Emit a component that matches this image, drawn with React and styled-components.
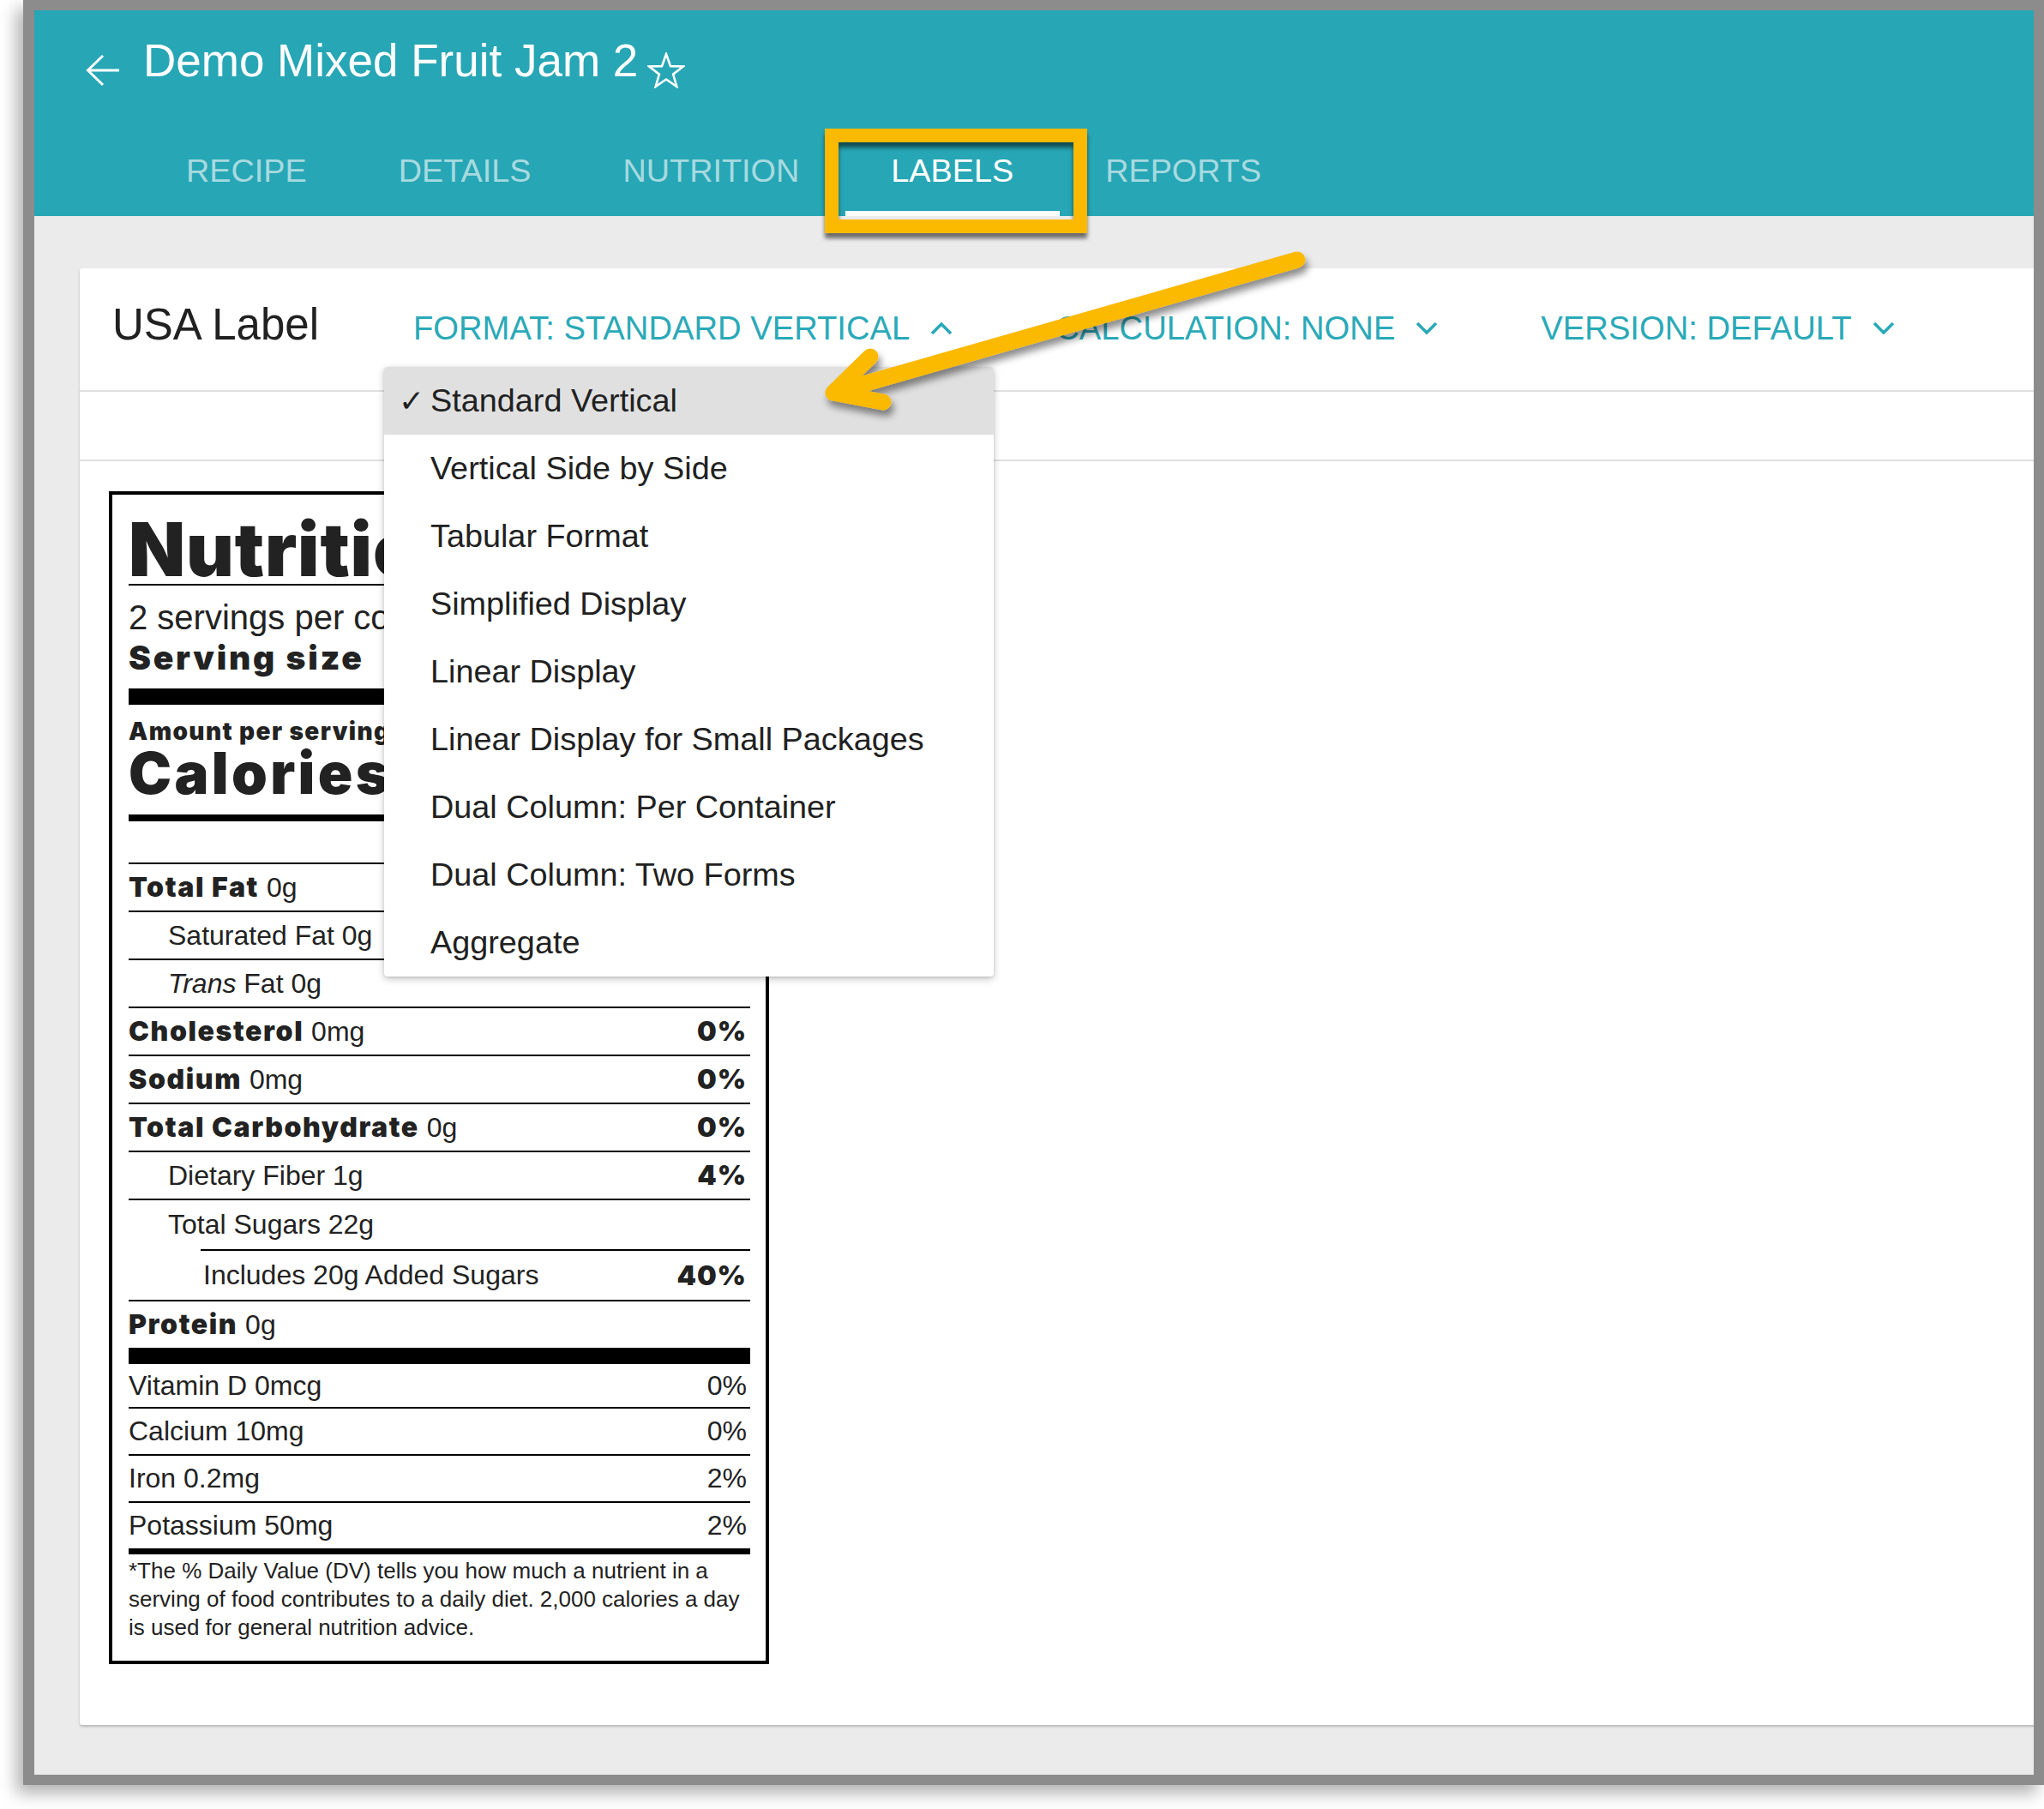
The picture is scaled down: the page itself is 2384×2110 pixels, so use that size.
import React from "react";
import styled, { createGlobalStyle } from "styled-components";

const teal = "#27a6b5";
const tealText = "#2aa9b8";
const ink = "#212121";
const marker = "#fbb900";
const heavy = `"Inter", "Roboto", "Liberation Sans", sans-serif`;

const GlobalStyle = createGlobalStyle`
  html, body {
    margin: 0;
    padding: 0;
    background: #fff;
  }
  body {
    font-family: "Liberation Sans", Arial, sans-serif;
  }
`;

const Screen = styled.div`
  position: relative;
  width: 2384px;
  height: 2110px;
  overflow: hidden;
  background: #fff;
`;

const Frame = styled.div`
  box-sizing: border-box;
  margin-left: 27px;
  width: 2357px;
  height: 2082px;
  border: 12px solid #8c8c8c;
  border-left-width: 13px;
  box-shadow: -8px 10px 18px rgba(0, 0, 0, 0.3);
  display: flex;
  flex-direction: column;
  overflow: hidden;
  background: #ebebeb;
`;

/* ---------- top bar ---------- */

const Header = styled.header`
  box-sizing: border-box;
  height: 240px;
  padding-top: 28px;
  background: ${teal};
  color: #fff;
`;

const TitleRow = styled.div`
  display: flex;
  align-items: center;
  height: 62px;
  padding-left: 60px;
`;

const IconSlot = styled.span`
  display: flex;
  margin-top: 22px;
  margin-left: ${p => p.$ml || 0}px;
  margin-right: ${p => p.$mr || 0}px;
`;

const Title = styled.h1`
  margin: 0;
  font-size: 53px;
  font-weight: 400;
  line-height: 62px;
  white-space: nowrap;
`;

const Tabs = styled.nav`
  display: flex;
  margin-top: 45px;
  padding-left: 123.5px;
`;

const Tab = styled.div`
  padding: 30px 53.5px 25px;
  font-size: 37.8px;
  line-height: 44px;
  text-transform: uppercase;
  white-space: nowrap;
  color: ${p => (p.$active ? "#fff" : "rgba(255, 255, 255, 0.6)")};
  border-bottom: 6px solid ${p => (p.$active ? "#fff" : "transparent")};
`;

/* ---------- card ---------- */

const Content = styled.main`
  flex: 1;
  padding: 61px 0 0 53px;
`;

const Card = styled.section`
  position: relative;
  margin-right: -40px;
  background: #fff;
  border-radius: 3px;
  box-shadow: 0 2px 3px rgba(0, 0, 0, 0.22);
`;

const CardHeader = styled.div`
  display: flex;
  align-items: baseline;
  box-sizing: border-box;
  height: 144px;
  padding: 36px 0 0 38px;
  border-bottom: 2px solid #e0e0e0;
`;

const CardTitle = styled.h2`
  margin: 0 50px 0 0;
  font-size: 51px;
  font-weight: 400;
  line-height: 60px;
  color: ${ink};
  white-space: nowrap;
`;

const Trigger = styled.div`
  display: inline-flex;
  align-items: center;
  gap: 24px;
  padding: 0 60px;
  font-size: 38.2px;
  line-height: 44px;
  color: ${tealText};
  text-transform: uppercase;
  white-space: nowrap;
`;

const Toolbar = styled.div`
  box-sizing: border-box;
  height: 81px;
  border-bottom: 2px solid #e0e0e0;
`;

const CardBody = styled.div`
  padding: 35px 0 71px 34px;
`;

const Menu = styled.ul`
  position: absolute;
  left: 355px;
  top: 115px;
  z-index: 2;
  width: 711px;
  margin: 0;
  padding: 0;
  list-style: none;
  background: #fff;
  border-radius: 4px;
  overflow: hidden;
  box-shadow: 0 3px 10px rgba(0, 0, 0, 0.22), 0 1px 3px rgba(0, 0, 0, 0.12);
`;

const MenuItem = styled.li`
  display: flex;
  align-items: baseline;
  height: 79px;
  font-size: 37.8px;
  line-height: 79px;
  color: ${ink};
  white-space: nowrap;
  background: ${p => (p.$selected ? "#e0e0e0" : "transparent")};
`;

const Check = styled.span`
  box-sizing: border-box;
  width: 54px;
  padding-left: 17px;
  font-family: "DejaVu Sans", sans-serif;
  font-size: 36px;
`;

/* ---------- nutrition facts panel ---------- */

const Panel = styled.div`
  box-sizing: border-box;
  width: 770px;
  padding: 0 16px 22px 19px;
  border: 4px solid #000;
  color: #222;
  font-family: "Liberation Sans", Arial, sans-serif;
`;

const Strong = styled.span`
  font-family: ${heavy};
  font-weight: 900;
  letter-spacing: 0.05em;
`;

const PanelTitle = styled.div`
  padding-top: 24px;
  border-bottom: 2px solid #000;
  font-family: ${heavy};
  font-weight: 900;
  font-size: 86px;
  line-height: 80px;
  letter-spacing: 0.01em;
  white-space: nowrap;
`;

const Servings = styled.div`
  margin-top: 15px;
  font-size: 40px;
  line-height: 44px;
  white-space: nowrap;
`;

const HeavyLine = styled.div`
  display: flex;
  justify-content: space-between;
  margin-top: ${p => p.$mt || 0}px;
  font-family: ${heavy};
  font-weight: 900;
  font-size: ${p => p.$size}px;
  line-height: ${p => p.$lh}px;
  letter-spacing: ${p => p.$track || 0.05}em;
  white-space: nowrap;
`;

const Bar = styled.div`
  height: ${p => p.$h}px;
  margin-top: ${p => p.$mt || 0}px;
  margin-right: 2px;
  background: #000;
`;

const DvHead = styled.div`
  text-align: right;
  font-family: ${heavy};
  font-weight: 900;
  font-size: 24px;
  line-height: 48px;
`;

const Row = styled.div`
  display: flex;
  justify-content: space-between;
  margin-left: ${p => p.$inset || 0}px;
  margin-right: 2px;
  padding-left: ${p => p.$indent || 0}px;
  padding-right: 4px;
  border-top: ${p => (p.$plain ? "none" : "2px solid #000")};
  font-size: 32px;
  line-height: ${p => p.$lh || 54}px;
  white-space: nowrap;
`;

const Dv = styled.span`
  font-family: ${p => (p.$light ? "inherit" : heavy)};
  font-weight: ${p => (p.$light ? 400 : 900)};
  letter-spacing: ${p => (p.$light ? 0 : "0.03em")};
`;

const Footnote = styled.p`
  margin: 0;
  padding-top: 3px;
  font-size: 26px;
  line-height: 33px;
`;

/* ---------- callouts drawn over the page ---------- */

const Callouts = styled.svg`
  position: absolute;
  left: 0;
  top: 0;
  z-index: 5;
  pointer-events: none;
`;

const BackArrow = () => (
  <svg width="40" height="38" viewBox="0 0 40 38" fill="none" stroke="#fff" strokeWidth="3">
    <path d="M20 2 L2.5 19 L20 36 M2.5 19 H39" />
  </svg>
);

const StarOutline = () => (
  <svg width="44" height="42" viewBox="0 0 44 42" fill="none" stroke="#fff" strokeWidth="2.6" strokeLinejoin="miter">
    <polygon points="22,2 27,16.1 42,16.5 30.1,25.6 34.3,40 22,31.5 9.7,40 13.9,25.6 2,16.5 17,16.1" />
  </svg>
);

const Chevron = ({ up }) => (
  <svg width="26" height="16" viewBox="0 0 26 16" fill="none" stroke={tealText} strokeWidth="3.6">
    <polyline points={up ? "2,14 13,3 24,14" : "2,2 13,13 24,2"} />
  </svg>
);

const tabs = ["Recipe", "Details", "Nutrition", "Labels", "Reports"];

const formats = [
  "Standard Vertical",
  "Vertical Side by Side",
  "Tabular Format",
  "Simplified Display",
  "Linear Display",
  "Linear Display for Small Packages",
  "Dual Column: Per Container",
  "Dual Column: Two Forms",
  "Aggregate"
];

const nutrients = [
  { strong: "Total Fat", text: " 0g", dv: "0%" },
  { text: "Saturated Fat 0g", indent: 46, dv: "0%" },
  { italic: "Trans", text: " Fat 0g", indent: 46 },
  { strong: "Cholesterol", text: " 0mg", dv: "0%" },
  { strong: "Sodium", text: " 0mg", dv: "0%" },
  { strong: "Total Carbohydrate", text: " 0g", dv: "0%" },
  { text: "Dietary Fiber 1g", indent: 46, dv: "4%" },
  { text: "Total Sugars 22g", indent: 46, lh: 57 },
  { text: "Includes 20g Added Sugars", inset: 84, indent: 3, dv: "40%", lh: 57 },
  { strong: "Protein", text: " 0g" }
];

const minerals = [
  { text: "Vitamin D 0mcg", dv: "0%" },
  { text: "Calcium 10mg", dv: "0%" },
  { text: "Iron 0.2mg", dv: "2%" },
  { text: "Potassium 50mg", dv: "2%" }
];

const FactsPanel = () => (
  <Panel>
    <PanelTitle>Nutrition Facts</PanelTitle>
    <Servings>2 servings per container</Servings>
    <HeavyLine $size={39} $lh={44} $mt={3} $track={0.07}>
      <span>Serving size</span>
      <span>2 Tbsp (40g)</span>
    </HeavyLine>
    <Bar $h={19} $mt={14} />
    <HeavyLine $size={28} $lh={32} $mt={15}>
      <span>Amount per serving</span>
    </HeavyLine>
    <HeavyLine $size={67} $lh={66}>
      <span>Calories</span>
      <span>90</span>
    </HeavyLine>
    <Bar $h={8} $mt={15} />
    <DvHead>% Daily Value*</DvHead>
    {nutrients.map(n => (
      <Row key={n.strong || n.italic || n.text} $indent={n.indent} $inset={n.inset} $lh={n.lh}>
        <span>
          {n.strong && <Strong>{n.strong}</Strong>}
          {n.italic && <i>{n.italic}</i>}
          {n.text}
        </span>
        {n.dv && <Dv>{n.dv}</Dv>}
      </Row>
    ))}
    <Bar $h={19} />
    {minerals.map((m, i) => (
      <Row key={m.text} $plain={i === 0} $lh={i === 0 ? 50 : 53}>
        <span>{m.text}</span>
        <Dv $light>{m.dv}</Dv>
      </Row>
    ))}
    <Bar $h={7} />
    <Footnote>
      *The % Daily Value (DV) tells you how much a nutrient in a serving of
      food contributes to a daily diet. 2,000 calories a day is used for
      general nutrition advice.
    </Footnote>
  </Panel>
);

const App = () => (
  <Screen>
    <GlobalStyle />
    <Frame>
      <Header>
        <TitleRow>
          <IconSlot $mr={27}>
            <BackArrow />
          </IconSlot>
          <Title>Demo Mixed Fruit Jam 2</Title>
          <IconSlot $ml={11}>
            <StarOutline />
          </IconSlot>
        </TitleRow>
        <Tabs>
          {tabs.map(t => (
            <Tab key={t} $active={t === "Labels"}>
              {t}
            </Tab>
          ))}
        </Tabs>
      </Header>

      <Content>
        <Card>
          <CardHeader>
            <CardTitle>USA Label</CardTitle>
            <Trigger>
              <span>Format: Standard Vertical</span>
              <Chevron up />
            </Trigger>
            <Trigger>
              <span>Calculation: None</span>
              <Chevron />
            </Trigger>
            <Trigger>
              <span>Version: Default</span>
              <Chevron />
            </Trigger>
          </CardHeader>
          <Toolbar />
          <CardBody>
            <FactsPanel />
          </CardBody>
          <Menu>
            {formats.map((f, i) => (
              <MenuItem key={f} $selected={i === 0}>
                <Check>{i === 0 ? "✓" : ""}</Check>
                {f}
              </MenuItem>
            ))}
          </Menu>
        </Card>
      </Content>
    </Frame>

    <Callouts width="2384" height="2110" viewBox="0 0 2384 2110">
      <defs>
        <filter id="boxShade" x="-10%" y="-20%" width="120%" height="150%">
          <feDropShadow dx="0" dy="6" stdDeviation="2.5" floodColor="#000" floodOpacity="0.55" />
        </filter>
        <filter id="arrowShade" x="-10%" y="-30%" width="120%" height="160%">
          <feDropShadow dx="3" dy="7" stdDeviation="4" floodColor="#000" floodOpacity="0.45" />
        </filter>
      </defs>
      <rect
        x="970"
        y="158"
        width="290"
        height="106"
        fill="none"
        stroke={marker}
        strokeWidth="16"
        filter="url(#boxShade)"
      />
      <path
        d="M1513 303 L972 458 M1015 416 L972 458 L1030 469"
        fill="none"
        stroke={marker}
        strokeWidth="19"
        strokeLinecap="round"
        strokeLinejoin="round"
        filter="url(#arrowShade)"
      />
    </Callouts>
  </Screen>
);

export default App;
